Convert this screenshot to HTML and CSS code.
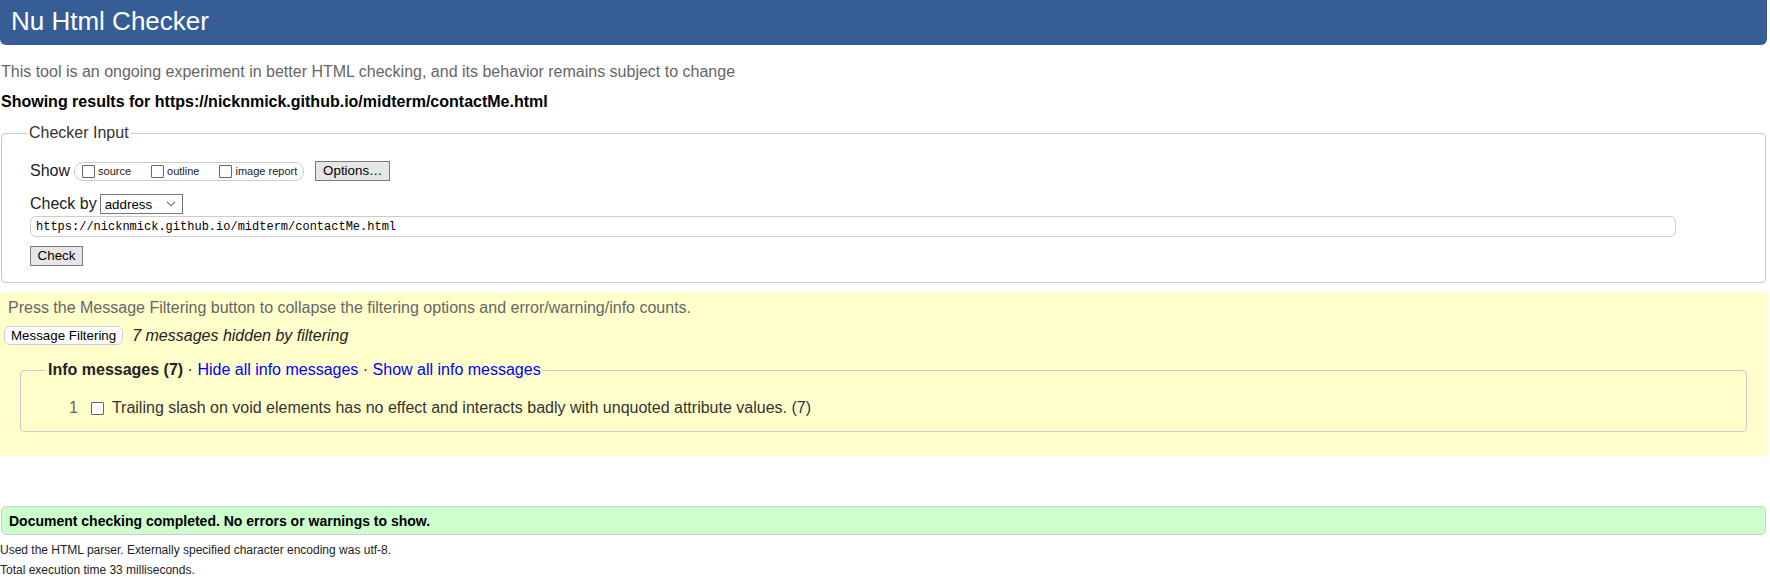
FILE: index.html
```html
<!DOCTYPE html>
<html lang="en">
<head>
<meta charset="utf-8">
<title>Nu Html Checker</title>
<link rel="stylesheet" href="styles.css">
</head>
<body>
<div class="page">
  <header class="topbar"><h1>Nu Html Checker</h1></header>
  <p class="intro">This tool is an ongoing experiment in better HTML checking, and its behavior remains subject to change</p>
  <p class="results">Showing results for https://nicknmick.github.io/midterm/contactMe.html</p>

  <fieldset class="checker">
    <legend>Checker Input</legend>
    <div class="checker-body">
      <div class="row show-row">
        <span class="lbl">Show</span>
        <span class="opts">
          <label class="opt"><input type="checkbox" class="cb"><span>source</span></label>
          <label class="opt"><input type="checkbox" class="cb"><span>outline</span></label>
          <label class="opt"><input type="checkbox" class="cb"><span>image report</span></label>
        </span>
        <button class="btn gray options" type="button">Options…</button>
      </div>
      <div class="row by-row">
        <span class="lbl">Check by</span>
        <span class="select-wrap">
          <select class="select"><option>address</option></select>
          <svg class="chev" width="10" height="6" viewBox="0 0 10 6"><path d="M1 0.8 L5 4.8 L9 0.8" fill="none" stroke="#666" stroke-width="1.1"/></svg>
        </span>
      </div>
      <input class="url" type="text" value="https://nicknmick.github.io/midterm/contactMe.html">
      <button class="btn gray check" type="button">Check</button>
    </div>
  </fieldset>

  <section class="filter">
    <p class="press">Press the Message Filtering button to collapse the filtering options and error/warning/info counts.</p>
    <div class="filter-row">
      <button class="btn white" type="button">Message Filtering</button>
      <em class="hidden-note">7 messages hidden by filtering</em>
    </div>
    <fieldset class="info">
      <legend><b>Info messages (7)</b> · <a class="link">Hide all info messages</a> · <a class="link">Show all info messages</a></legend>
      <div class="msg">
        <span class="num">1</span>
        <input type="checkbox" class="cb msg-cb">
        <span class="msg-text">Trailing slash on void elements has no effect and interacts badly with unquoted attribute values. (7)</span>
      </div>
    </fieldset>
  </section>

  <div class="success">Document checking completed. No errors or warnings to show.</div>
  <p class="foot">Used the HTML parser. Externally specified character encoding was utf-8.</p>
  <p class="foot foot2">Total execution time 33 milliseconds.</p>
</div>
</body>
</html>
```

FILE: styles.css
```css
body {
  margin: 0;
  font-family: "Liberation Sans", Arial, sans-serif;
  font-size: 16px;
  line-height: 18px;
  color: #000;
  background: #fff;
}

.page {
  width: 1767px;
}

.topbar {
  height: 45px;
  background: #365d95;
  border-radius: 0 0 6px 6px;
}

.topbar h1 {
  margin: 0;
  padding-left: 11px;
  font-size: 26px;
  font-weight: normal;
  line-height: 42px;
  color: #fff;
}

.intro {
  margin: 18px 0 0;
  padding-left: 1px;
  color: #666;
}

.results {
  margin: 12px 0 0;
  padding-left: 1px;
  font-weight: bold;
}

.checker {
  margin: 13px 1px 0;
  padding: 0;
  border: 1px solid #ccc;
  border-radius: 4px;
  min-width: 0;
}

.checker legend {
  margin-left: 25px;
  padding: 0 2px;
  color: #333;
  line-height: 18px;
}

.checker-body {
  padding: 19px 0 16px 28px;
}

.row {
  display: flex;
  align-items: center;
  height: 20px;
}

.lbl {
  line-height: 18px;
  color: #222;
}

.opts {
  display: flex;
  align-items: center;
  gap: 20px;
  height: 17px;
  margin-left: 4px;
  padding: 0 6px 0 7px;
  border: 1px solid #ccc;
  border-radius: 9px;
}

.opt {
  display: flex;
  align-items: center;
  gap: 3px;
  font-size: 11px;
  line-height: 13px;
  color: #222;
}

.cb {
  appearance: none;
  -webkit-appearance: none;
  width: 13px;
  height: 13px;
  margin: 0;
  border: 1px solid #666;
  border-radius: 1px;
  background: #fff;
  box-sizing: border-box;
}

.btn {
  font-family: "Liberation Sans", Arial, sans-serif;
  font-size: 13.33px;
  line-height: 16px;
  color: #000;
  margin: 0;
  padding: 0 6px;
  box-sizing: border-box;
}

.btn.gray {
  height: 20px;
  background: #e6e6e6;
  border: 1px solid #7a7a7a;
  border-radius: 0;
}

.options {
  width: 75px;
  margin-left: 11px;
}

.by-row {
  margin-top: 13px;
}

.select-wrap {
  position: relative;
  display: inline-flex;
  margin-left: 3px;
}

.select {
  appearance: none;
  -webkit-appearance: none;
  width: 83px;
  height: 20px;
  margin: 0;
  padding: 0 0 0 4px;
  border: 1px solid #767676;
  border-radius: 0;
  background: #fff;
  font-family: "Liberation Sans", Arial, sans-serif;
  font-size: 13.33px;
  color: #000;
  box-sizing: border-box;
}

.chev {
  position: absolute;
  right: 7px;
  top: 7px;
  pointer-events: none;
}

.url {
  display: block;
  width: 1646px;
  height: 21px;
  margin: 2px 0 0;
  padding: 0 5px;
  border: 1px solid #ccc;
  border-radius: 6px;
  background: #fff;
  font-family: "Liberation Mono", "Courier New", monospace;
  font-size: 12px;
  color: #000;
  box-sizing: border-box;
}

.check {
  display: block;
  width: 53px;
  margin-top: 9px;
}

.filter {
  margin-top: 9px;
  padding: 7px 0 24px;
  background: #ffffcc;
}

.press {
  margin: 0;
  padding-left: 8px;
  color: #666;
}

.filter-row {
  display: flex;
  align-items: center;
  margin-top: 9px;
  padding-left: 4px;
}

.btn.white {
  height: 19px;
  background: #fff;
  border: 1px solid #ccc;
  border-radius: 6px;
}

.hidden-note {
  margin-left: 9px;
  color: #222;
}

.info {
  margin: 16px 20px 0;
  padding: 0;
  border: 1px solid #ccc;
  border-radius: 4px;
  min-width: 0;
}

.info legend {
  margin-left: 25px;
  padding: 0 2px;
  line-height: 18px;
  color: #222;
}

.link {
  color: #0000ff;
  text-decoration: none;
}

.msg {
  display: flex;
  align-items: center;
  padding: 20px 0 14px 48px;
  color: #333;
}

.num {
  color: #666;
}

.msg-cb {
  margin-left: 13px;
}

.msg-text {
  margin-left: 8px;
}

.success {
  margin: 50px 1px 0;
  padding: 1px 0 0 7px;
  border: 1px solid #ccc;
  border-radius: 5px;
  background: #ccffcc;
  font-size: 14px;
  font-weight: bold;
  line-height: 26px;
}

.foot {
  margin: 8px 0 0;
  font-size: 12px;
  line-height: 14px;
  color: #222;
}

.foot2 {
  margin-top: 6px;
}
```
